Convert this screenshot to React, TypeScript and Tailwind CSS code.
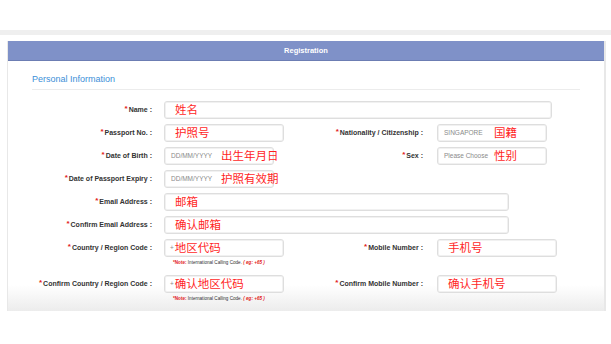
import React from 'react';

const sans = "font-['Liberation_Sans','Helvetica','Arial',sans-serif]";
const cjk = "font-['Noto_Sans_CJK_SC','Liberation_Sans',sans-serif]";

function Label({ text, width }: { text: string; width: string }) {
  return (
    <div className={`${width} shrink-0 text-right text-[7px] font-bold leading-none text-[#333] whitespace-nowrap`}>
      <span className="relative -top-[1px] mr-[1px] text-[8px] text-[#e21b1b]">*</span>
      {text} :
    </div>
  );
}

function Field({
  width,
  pad = 'pl-[10px]',
  placeholder,
  phWidth = 'w-auto mr-[1px]',
  hint,
}: {
  width: string;
  pad?: string;
  placeholder?: string;
  phWidth?: string;
  hint?: string;
}) {
  return (
    <div
      className={`${width} ${pad} h-[18px] shrink-0 flex items-center rounded-[3px] border border-[#dedede] bg-white shadow-[inset_0_0_0_1px_#f1f1f1] whitespace-nowrap`}
    >
      {placeholder && <span className={`${phWidth} shrink-0 text-[6.5px] text-[#8a8a8a]`}>{placeholder}</span>}
      {hint && <span className={`${cjk} text-[11.5px] leading-none text-[#ff1f1f]`}>{hint}</span>}
    </div>
  );
}

function Note() {
  return (
    <div className="ml-[165px] mt-[3px] h-[6px] text-[4.6px] leading-[6px] text-[#333] whitespace-nowrap">
      <span className="font-bold text-[#e21b1b]">*Note:</span> International Calling Code.{' '}
      <span className="font-bold italic text-[#e21b1b]">( eg: +65 )</span>
    </div>
  );
}

export default function App() {
  return (
    <div className={`${sans} w-[611px] h-[344px] bg-white overflow-hidden`}>
      <div className="h-[30px]" />
      <div className="h-[5px] bg-[#efefef]" />
      <div className="h-[6px]" />

      <div className="ml-[7px] w-[599px] border-l border-r-2 border-[#e8e8e8]">
        <div className="h-[20px] flex items-center justify-center bg-[#7f91c8] border-b border-[#6c7db3] text-[7.5px] font-bold text-white">
          Registration
        </div>

        <div className="pt-[13px] pb-[9px] bg-[linear-gradient(to_bottom,#fff_calc(100%-26px),#ececec)]">
          <div className="ml-[24px] text-[9px] leading-[11px] text-[#3d8fd8]">Personal Information</div>
          <div className="ml-[24px] mt-[4px] w-[548px] h-px bg-[#ececec]" />

          <div className="mt-[11px] flex flex-col">
            <div className="flex items-center mb-[5px]">
              <Label text="Name" width="w-[144px]" />
              <div className="ml-[12px]">
                <Field width="w-[388px]" hint="姓名" />
              </div>
            </div>

            <div className="flex items-center mb-[5px]">
              <div className="w-[276px] flex items-center">
                <Label text="Passport No." width="w-[144px]" />
                <div className="ml-[12px]">
                  <Field width="w-[120px]" hint="护照号" />
                </div>
              </div>
              <Label text="Nationality / Citizenship" width="w-[139px]" />
              <div className="ml-[14px]">
                <Field width="w-[110px]" pad="pl-[6px]" placeholder="SINGAPORE" phWidth="w-[50px]" hint="国籍" />
              </div>
            </div>

            <div className="flex items-center mb-[5px]">
              <div className="w-[276px] flex items-center">
                <Label text="Date of Birth" width="w-[144px]" />
                <div className="ml-[12px]">
                  <Field width="w-[110px]" pad="pl-[6px]" placeholder="DD/MM/YYYY" phWidth="w-[50px]" hint="出生年月日" />
                </div>
              </div>
              <Label text="Sex" width="w-[139px]" />
              <div className="ml-[14px]">
                <Field width="w-[110px]" pad="pl-[6px]" placeholder="Please Choose" phWidth="w-[50px]" hint="性别" />
              </div>
            </div>

            <div className="flex items-center mb-[5px]">
              <Label text="Date of Passport Expiry" width="w-[144px]" />
              <div className="ml-[12px]">
                <Field width="w-[110px]" pad="pl-[6px]" placeholder="DD/MM/YYYY" phWidth="w-[50px]" hint="护照有效期" />
              </div>
            </div>

            <div className="flex items-center mb-[5px]">
              <Label text="Email Address" width="w-[144px]" />
              <div className="ml-[12px]">
                <Field width="w-[345px]" hint="邮箱" />
              </div>
            </div>

            <div className="flex items-center mb-[5px]">
              <Label text="Confirm Email Address" width="w-[144px]" />
              <div className="ml-[12px]">
                <Field width="w-[345px]" hint="确认邮箱" />
              </div>
            </div>

            <div className="flex items-center">
              <div className="w-[276px] flex items-center">
                <Label text="Country / Region Code" width="w-[144px]" />
                <div className="ml-[12px]">
                  <Field width="w-[120px]" pad="pl-[5px]" placeholder="+" hint="地区代码" />
                </div>
              </div>
              <Label text="Mobile Number" width="w-[139px]" />
              <div className="ml-[14px]">
                <Field width="w-[120px]" hint="手机号" />
              </div>
            </div>
            <Note />

            <div className="flex items-center mt-[9px]">
              <div className="w-[276px] flex items-center">
                <Label text="Confirm Country / Region Code" width="w-[144px]" />
                <div className="ml-[12px]">
                  <Field width="w-[120px]" pad="pl-[5px]" placeholder="+" hint="确认地区代码" />
                </div>
              </div>
              <Label text="Confirm Mobile Number" width="w-[139px]" />
              <div className="ml-[14px]">
                <Field width="w-[120px]" hint="确认手机号" />
              </div>
            </div>
            <Note />
          </div>
        </div>
      </div>
    </div>
  );
}
